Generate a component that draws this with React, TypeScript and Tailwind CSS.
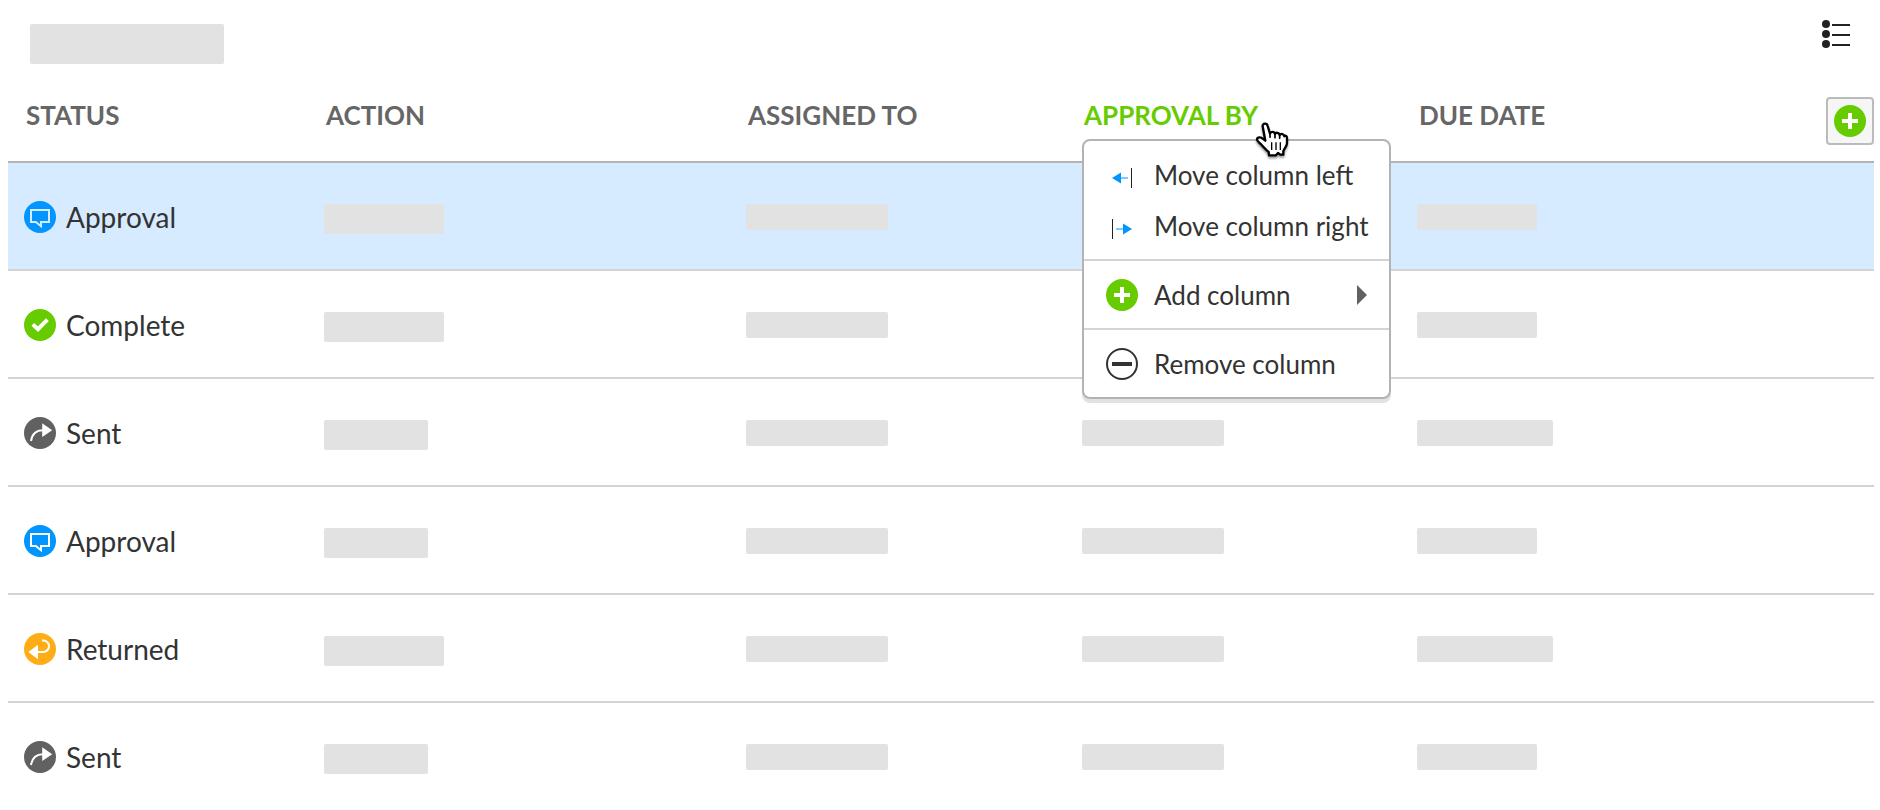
import type { ReactNode } from 'react';
import clsx from 'clsx';

type Status = 'Approval' | 'Complete' | 'Sent' | 'Returned';

const rows: { status: Status; action: string; due: string }[] = [
    { status: 'Approval', action: 'w-[120px]', due: 'w-[120px]' },
    { status: 'Complete', action: 'w-[120px]', due: 'w-[120px]' },
    { status: 'Sent', action: 'w-[104px]', due: 'w-[136px]' },
    { status: 'Approval', action: 'w-[104px]', due: 'w-[120px]' },
    { status: 'Returned', action: 'w-[120px]', due: 'w-[136px]' },
    { status: 'Sent', action: 'w-[104px]', due: 'w-[120px]' },
];

function StatusIcon({ status }: { status: Status }) {
    return (
        <svg viewBox="0 0 32 32" className="size-8 shrink-0" fill="none" aria-hidden="true">
            {status === 'Approval' && (
                <>
                    <circle cx="16" cy="16" r="16" fill="#0095ff" />
                    <path d="M7 9H25V21H17V25.2L11.8 21H7Z" stroke="currentColor" strokeWidth="2" />
                </>
            )}
            {status === 'Complete' && (
                <>
                    <circle cx="16" cy="16" r="16" fill="#66cc00" />
                    <path d="M8.8 15.4L14 20.2L23.4 10.6" stroke="currentColor" strokeWidth="4" />
                </>
            )}
            {status === 'Sent' && (
                <>
                    <circle cx="16" cy="16" r="16" fill="#616161" />
                    <path d="M7 24C8 17.5 12 13.2 19 13.2" stroke="currentColor" strokeWidth="2" />
                    <path d="M18.2 6.2L28.2 13.2L18.2 20Z" fill="currentColor" />
                </>
            )}
            {status === 'Returned' && (
                <>
                    <circle cx="16" cy="16" r="16" fill="#ffad17" />
                    <path d="M18 7.5H19.3A5.75 5.75 0 0 1 19.3 19H13" stroke="currentColor" strokeWidth="2" />
                    <path d="M4.3 19L14 11.7V26.3Z" fill="currentColor" />
                </>
            )}
        </svg>
    );
}

function PlusIcon() {
    return (
        <svg viewBox="0 0 32 32" className="size-8 shrink-0" aria-hidden="true">
            <circle cx="16" cy="16" r="16" fill="#66cc00" />
            <path d="M14 8h4v6h6v4h-6v6h-4v-6H8v-4h6z" fill="#fff" />
        </svg>
    );
}

function MinusIcon() {
    return (
        <svg viewBox="0 0 32 32" className="size-8 shrink-0" aria-hidden="true">
            <circle cx="16" cy="16" r="15" fill="none" stroke="#333" strokeWidth="2" />
            <path d="M6 14h20v4H6z" fill="#333" />
        </svg>
    );
}

function MoveLeftIcon() {
    return (
        <svg viewBox="0 0 32 32" className="size-8 shrink-0" aria-hidden="true">
            <path d="M6 19l9-5.5v5h7v1h-7v5z" fill="#0095ff" />
            <path d="M25 9h1v20h-1z" fill="#222" />
        </svg>
    );
}

function MoveRightIcon() {
    return (
        <svg viewBox="0 0 32 32" className="size-8 shrink-0" aria-hidden="true">
            <path d="M26 19l-9-5.5v5h-7v1h7v5z" fill="#0095ff" />
            <path d="M6 9h1v20H6z" fill="#222" />
        </svg>
    );
}

function ListIcon() {
    return (
        <svg viewBox="0 0 28 28" className="size-7" fill="#222" aria-hidden="true">
            <circle cx="4" cy="4" r="4" />
            <circle cx="4" cy="14" r="4" />
            <circle cx="4" cy="24" r="4" />
            <path d="M10 4h18v2H10zM10 14h18v2H10zM10 24h18v2H10z" />
        </svg>
    );
}

function HandPointer({ className }: { className?: string }) {
    return (
        <svg viewBox="45 33 102 108" className={clsx('h-9 w-[34px]', className)} aria-hidden="true">
            <path
                d="M68 46C67 36 81 35 83 45L90 68C92 61 103 61 105 69C108 63 118 65 119 72C123 66 132 69 133 76C135 73 141 74 141 81L141 97C141 106 131 114 130 121L130 131L121 131L114 126L108 133L87 133L86 123C77 116 70 108 63 100C57 94 51 91 51 85C52 77 64 78 68 83L76 89Z"
                fill="#fff"
                stroke="#000"
                strokeWidth="7"
                strokeLinejoin="round"
            />
            <path d="M90 66V79M105 69V80M119 72V82" stroke="#000" strokeWidth="5" strokeLinecap="round" />
            <path d="M95 94V117M108 94V117M121 94V117" stroke="#000" strokeWidth="4" />
        </svg>
    );
}

function Placeholder({ className }: { className?: string }) {
    return <div className={clsx('rounded-xs bg-[#e2e2e2]', className)} />;
}

function MenuItem({ icon, label, submenu }: { icon: ReactNode; label: string; submenu?: boolean }) {
    return (
        <button
            type="button"
            role="menuitem"
            className="flex h-[51px] w-full items-center gap-4 px-[22px] text-left whitespace-nowrap"
        >
            {icon}
            <span className="flex-1">{label}</span>
            {submenu && (
                <svg viewBox="0 0 10 20" className="h-5 w-2.5" aria-hidden="true">
                    <path d="M0 0l10 10L0 20z" fill="#616161" />
                </svg>
            )}
        </button>
    );
}

function ColumnMenu() {
    return (
        <div
            role="menu"
            className="absolute top-[58px] left-4 z-10 w-[309px] divide-y-2 divide-[#d4d4d4] rounded-lg border-2 border-[#b3b3b3] bg-white text-[26px] leading-8 font-normal text-[#333] shadow-[0_4px_0_#e2e2e2]"
        >
            <div className="py-2">
                <MenuItem icon={<MoveLeftIcon />} label="Move column left" />
                <MenuItem icon={<MoveRightIcon />} label="Move column right" />
            </div>
            <div className="py-2">
                <MenuItem icon={<PlusIcon />} label="Add column" submenu />
            </div>
            <div className="py-2">
                <MenuItem icon={<MinusIcon />} label="Remove column" />
            </div>
        </div>
    );
}

function HeaderCell({ children, className }: { children: ReactNode; className?: string }) {
    return (
        <th scope="col" className={clsx('relative border-b-2 border-[#b3b3b3] pb-3 pl-[18px] text-left', className)}>
            {children}
        </th>
    );
}

export default function App() {
    return (
        <main className="min-h-screen bg-white pr-1.5 pl-2 font-[Lato,sans-serif] text-[#333]">
            <div className="flex items-start justify-between pt-5 pr-6 pb-[17px] pl-[22px]">
                <Placeholder className="mt-1 h-10 w-[194px]" />
                <button type="button" aria-label="List view">
                    <ListIcon />
                </button>
            </div>

            <table className="w-full table-fixed border-separate border-spacing-0">
                <colgroup>
                    <col className="w-[300px]" />
                    <col className="w-[422px]" />
                    <col className="w-[336px]" />
                    <col className="w-[335px]" />
                    <col />
                    <col className="w-12" />
                </colgroup>
                <thead>
                    <tr className="h-[82px] text-[26px] leading-8 font-bold text-[#666]">
                        <HeaderCell>STATUS</HeaderCell>
                        <HeaderCell>ACTION</HeaderCell>
                        <HeaderCell>ASSIGNED TO</HeaderCell>
                        <HeaderCell className="text-[#66cc00]">
                            <button type="button" aria-haspopup="menu" aria-expanded="true">
                                APPROVAL BY
                            </button>
                            <ColumnMenu />
                            <HandPointer className="absolute top-[41px] left-[189px] z-20 drop-shadow-[0_2px_1px_rgba(0,0,0,0.4)]" />
                        </HeaderCell>
                        <HeaderCell>DUE DATE</HeaderCell>
                        <th scope="col" className="border-b-2 border-[#b3b3b3]">
                            <button
                                type="button"
                                aria-label="Add column"
                                className="flex size-12 items-center justify-center rounded border-2 border-[#bbb] bg-[#f6f6f6]"
                            >
                                <PlusIcon />
                            </button>
                        </th>
                    </tr>
                </thead>
                <tbody className="[&>tr:last-child>td]:border-b-0">
                    {rows.map((row, i) => (
                        <tr
                            key={i}
                            className={clsx(
                                'h-[108px] *:border-b-2 *:border-[#d4d4d4] *:pl-4 *:align-top',
                                i === 0 && 'bg-[#d6ebff]'
                            )}
                        >
                            <td className="pt-[38px]">
                                <div className="flex items-center gap-2.5 text-[28px] leading-8">
                                    <span className={i === 0 ? 'text-[#d6ebff]' : 'text-white'}>
                                        <StatusIcon status={row.status} />
                                    </span>
                                    {row.status}
                                </div>
                            </td>
                            <td className="pt-[41px]">
                                <Placeholder className={clsx('h-[30px]', row.action)} />
                            </td>
                            <td className="pt-[41px]">
                                <Placeholder className="h-[26px] w-[142px]" />
                            </td>
                            <td className="pt-[41px]">
                                <Placeholder className="h-[26px] w-[142px]" />
                            </td>
                            <td className="pt-[41px]">
                                <Placeholder className={clsx('h-[26px]', row.due)} />
                            </td>
                            <td />
                        </tr>
                    ))}
                </tbody>
            </table>
        </main>
    );
}
